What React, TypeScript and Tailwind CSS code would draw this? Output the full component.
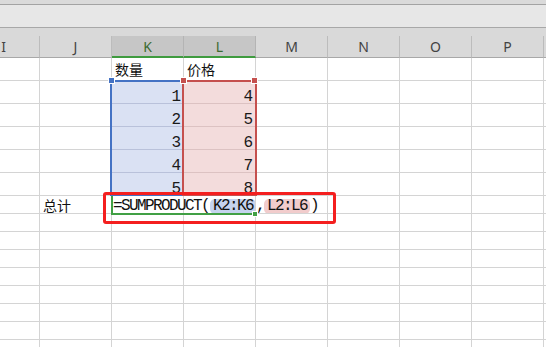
import React from "react";

type Col = { key: string; label: string; selected?: boolean };

const columns: Col[] = [
  { key: "I", label: "I" },
  { key: "J", label: "J" },
  { key: "K", label: "K", selected: true },
  { key: "L", label: "L", selected: true },
  { key: "M", label: "M" },
  { key: "N", label: "N" },
  { key: "O", label: "O" },
  { key: "P", label: "P" },
  { key: "Q", label: "" },
];

const qty = [1, 2, 3, 4, 5];
const price = [4, 5, 6, 7, 8];

function HeaderRow() {
  return (
    <div className="flex h-[22px] ml-[-32px]">
      {columns.map((c) =>
        c.selected ? (
          <div
            key={c.key}
            className="w-[72px] shrink-0 h-full flex items-center justify-center bg-[#c6c6c6] border-r border-r-[#b4b4b4] border-b-2 border-b-[#3f9b3f] text-[14px] text-[#3b6a30] [font-family:'Noto_Sans',sans-serif]"
          >
            {c.label}
          </div>
        ) : (
          <div
            key={c.key}
            className="w-[72px] shrink-0 h-full flex items-center justify-center bg-[#d9d9d9] border-r border-r-[#bcbcbc] border-b border-b-[#a8a8a8] text-[14px] text-[#434343] [font-family:'Noto_Sans',sans-serif]"
          >
            {c.label}
          </div>
        )
      )}
    </div>
  );
}

function Cell({
  children,
  className = "",
}: {
  children?: React.ReactNode;
  className?: string;
}) {
  return (
    <div
      className={`w-[72px] shrink-0 h-full flex border-r border-b ${className}`}
    >
      {children}
    </div>
  );
}

const plain = "border-[#d4d4d4]";
const blueFill = "bg-[#dae1f3] border-[#b9c1da]";
const redFill = "bg-[#f3dcdc] border-[#dcc2c2]";

function Num({ v }: { v: number }) {
  return (
    <div className="flex-1 flex items-end justify-end pr-[2px]">
      <span className="text-[16px] leading-[12px] text-[#1a1a1a] [font-family:'Liberation_Mono',monospace]">
        {v}
      </span>
    </div>
  );
}

function Cjk({ text, pb }: { text: string; pb: string }) {
  return (
    <div className={`flex-1 flex items-end pl-[3px] ${pb}`}>
      <span className="text-[14px] leading-[14px] text-[#111] [font-family:'Noto_Sans_CJK_SC',sans-serif]">
        {text}
      </span>
    </div>
  );
}

function Formula() {
  return (
    <div className="flex-1 flex items-end pl-[1px] overflow-visible whitespace-nowrap">
      <div className="flex h-[15px] mb-[-1px] text-[16px] leading-[15px] tracking-[-1.6px] text-[#111] [font-family:'Liberation_Mono',monospace]">
        <span>=SUMPRODUCT(</span>
        <span className="ml-[1px] px-[3px] rounded-[5px] bg-[#c5d3ee]">K2:K6</span>
        <span>,</span>
        <span className="px-[3px] rounded-[5px] bg-[#f1cccc]">L2:L6</span>
        <span>)</span>
      </div>
    </div>
  );
}

export default function App() {
  const rows: React.ReactNode[] = [];

  // row 1: column titles
  rows.push(
    <div key="r1" className="flex h-[23px] ml-[-32px]">
      <Cell className={plain} />
      <Cell className={plain} />
      <Cell className={plain}>
        <Cjk text="数量" pb="pb-[4px]" />
      </Cell>
      <Cell className={plain}>
        <Cjk text="价格" pb="pb-[4px]" />
      </Cell>
      {columns.slice(4).map((c) => (
        <Cell key={c.key} className={plain} />
      ))}
    </div>
  );

  // rows 2-6: data
  qty.forEach((q, i) => {
    rows.push(
      <div key={`d${i}`} className="flex h-[23px] ml-[-32px]">
        <Cell className={plain} />
        <Cell className={plain} />
        <Cell className={blueFill}>
          <Num v={q} />
        </Cell>
        <Cell className={redFill}>
          <Num v={price[i]} />
        </Cell>
        {columns.slice(4).map((c) => (
          <Cell key={c.key} className={plain} />
        ))}
      </div>
    );
  });

  // row 7: total with formula being edited
  rows.push(
    <div key="r7" className="flex h-[18px] ml-[-32px]">
      <Cell className={plain} />
      <Cell className={plain}>
        <Cjk text="总计" pb="pb-[1px]" />
      </Cell>
      <Cell className={`${plain} overflow-visible`}>
        <Formula />
      </Cell>
      {columns.slice(3).map((c) => (
        <Cell key={c.key} className={plain} />
      ))}
    </div>
  );

  // empty rows below
  for (let r = 0; r < 9; r++) {
    rows.push(
      <div key={`e${r}`} className="flex h-[18px] ml-[-32px]">
        {columns.map((c) => (
          <Cell key={c.key} className={plain} />
        ))}
      </div>
    );
  }

  return (
    <div className="relative w-[546px] h-[347px] overflow-hidden bg-white">
      {/* window chrome above the sheet */}
      <div className="h-[5px] bg-[#dadada] border-b border-[#a3a3a3]" />
      <div className="h-[23px] bg-[#e7e7e7] border-b border-[#a8a8a8]" />
      <div className="h-[8px] bg-[#d9d9d9]" />

      <HeaderRow />
      <div className="flex flex-col">{rows}</div>

      {/* reference range K2:K6 */}
      <div className="absolute left-[110px] top-[80px] w-[74px] h-[116px] border-l-2 border-t-2 border-b-2 border-[#4472c4]" />
      <div className="absolute left-[108px] top-[77px] w-[7px] h-[7px] bg-[#4472c4] border border-white" />

      {/* reference range L2:L6 */}
      <div className="absolute left-[182px] top-[80px] w-[75px] h-[116px] border-2 border-[#c5504e]" />
      <div className="absolute left-[180px] top-[77px] w-[7px] h-[7px] bg-[#c5504e] border border-white" />
      <div className="absolute left-[251px] top-[77px] w-[7px] h-[7px] bg-[#c5504e] border border-white" />

      {/* active cell K7 */}
      <div className="absolute left-[111px] top-[196px] w-[145px] h-[19px] border-l-2 border-b-2 border-[#41a045]" />
      <div className="absolute left-[252px] top-[211px] w-[6px] h-[6px] bg-[#41a045] border border-white" />

      {/* highlight frame around the formula */}
      <div className="absolute left-[103px] top-[192px] w-[233px] h-[32px] border-[3px] border-[#f41f1f] rounded-[3px]" />
    </div>
  );
}
